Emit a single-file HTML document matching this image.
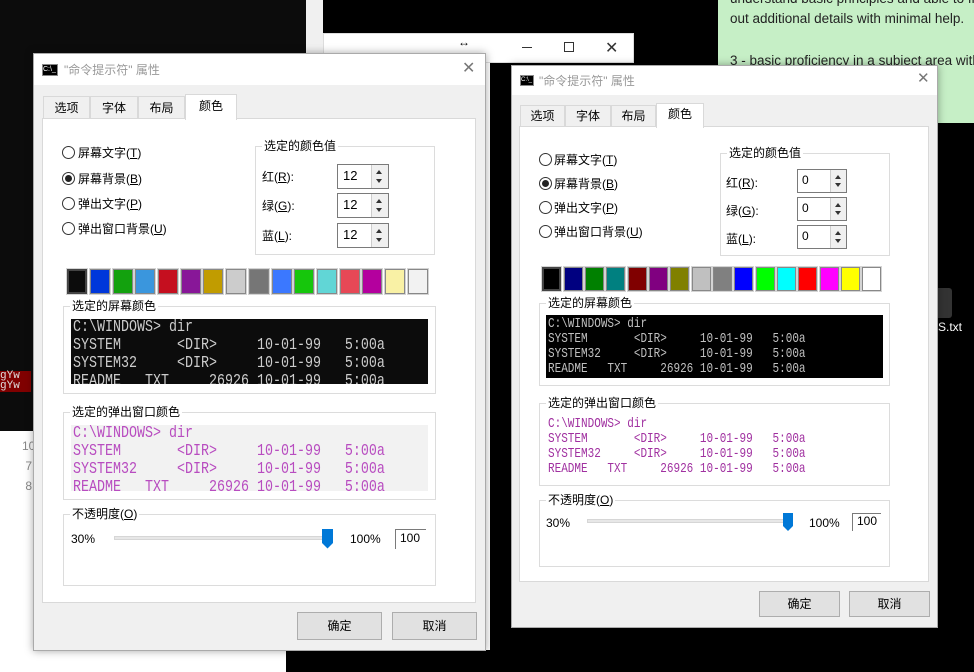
<!DOCTYPE html>
<html><head><meta charset="utf-8"><style>
*{margin:0;padding:0;box-sizing:border-box}
body{width:974px;height:672px;overflow:hidden;position:relative;background:#fff;font-family:"Liberation Sans","Noto Sans CJK SC",sans-serif;font-size:12px;color:#000}
.a{position:absolute}
.dlg{position:absolute;background:#f0f0f0;border:1px solid #aaa;box-shadow:0 0 8px rgba(0,0,0,.35)}
.title{position:absolute;left:0;top:0;right:0;background:#fff;color:#999;font-size:12px}
.tab{position:absolute;border:1px solid #d9d9d9;border-bottom:none;background:#f0f0f0;text-align:center}
.panel{position:absolute;background:#fff;border:1px solid #d9d9d9}
.grp{position:absolute;border:1px solid #dcdcdc}
.grp>span.l{position:absolute;top:-9px;left:6px;background:#fff;padding:0 2px;line-height:16px}
.radio{position:absolute;width:13px;height:13px;border:1px solid #333;border-radius:50%;background:#fff}
.radio.on::after{content:"";position:absolute;left:2px;top:2px;width:7px;height:7px;border-radius:50%;background:#222}
.spin{position:absolute;border:1px solid #7a7a7a;background:#fff}
.spin .b{position:absolute;right:0;top:0;bottom:0;border-left:1px solid #ccc;background:#f0f0f0}
.spin .b i{position:absolute;left:4px;width:0;height:0;border-left:3px solid transparent;border-right:3px solid transparent}
.sw{position:absolute;border:1px solid #888;outline:1px solid #d4d4d4}
.pre{position:absolute;overflow:hidden}
.pre span{display:block;font-family:"Liberation Mono",monospace;white-space:pre;transform-origin:0 0}
.L span{font-size:17px;line-height:18px;transform:scaleX(0.784)}
.R span{font-size:14px;line-height:15px;transform:scaleX(0.786)}
.btn{position:absolute;background:#e1e1e1;border:1px solid #adadad;text-align:center}
u{text-decoration:underline}
</style></head><body>
<div class="a" style="left:0;top:0;width:306px;height:431px;background:#0c0c0c"></div>
<div class="a" style="left:0;top:371px;width:31px;height:21px;background:#800000;color:#ddd;font-family:'Liberation Mono',monospace;font-size:11px;line-height:10px">gYw<br>gYw</div>
<div class="a" style="left:22px;top:436px;color:#888;font-size:12px;line-height:20px">10<br>&nbsp;7<br>&nbsp;8</div>
<div class="a" style="left:306px;top:0;width:17px;height:53px;background:#f0f0f0"></div>
<div class="a" style="left:323px;top:0;width:395px;height:33px;background:#000"></div>
<div class="a" style="left:323px;top:33px;width:311px;height:30px;background:#fff;border:1px solid #ddd"></div>
<div class="a" style="left:458px;top:35px;font-size:12px">↔</div>
<div class="a" style="left:522px;top:47px;width:10px;height:1px;background:#333"></div>
<div class="a" style="left:564px;top:42px;width:10px;height:10px;border:1px solid #333"></div>
<div class="a" style="left:605px;top:38px;font-size:16px;color:#333">✕</div>
<div class="a" style="left:490px;top:0;width:484px;height:672px;background:#000;z-index:-1"></div>
<div class="a" style="left:718px;top:0;width:256px;height:123px;background:#c6efc6;color:#222;font-size:13.5px;line-height:20px;padding-left:12px">
<div style="margin-top:-11px;white-space:nowrap">understand basic principles and able to fig</div>
<div style="white-space:nowrap">out additional details with minimal help.</div>
<div style="white-space:nowrap;margin-top:22px">3 - basic proficiency in a subject area witho</div></div>
<div class="a" style="left:930px;top:288px;width:22px;height:30px;background:#333;border-radius:3px"></div>
<div class="a" style="left:938px;top:320px;color:#fff;font-size:12px">S.txt</div>
<div class="a" style="left:286px;top:650px;width:300px;height:22px;background:#000"></div>

<!-- LEFT DIALOG -->
<div class="dlg" style="left:33px;top:53px;width:453px;height:598px">
 <div class="title" style="height:31px">
  <div class="a" style="left:8px;top:10px;width:16px;height:12px;background:#000;border:1px solid #888;color:#fff;font-size:7px;line-height:10px">C:\_</div>
  <div class="a" style="left:30px;top:7px">"命令提示符" 属性</div>
  <div class="a" style="left:428px;top:4px;font-size:16px;color:#777">✕</div>
 </div>
 <div class="tab" style="left:9px;top:42px;width:47px;height:23px;line-height:22px">选项</div>
 <div class="tab" style="left:56px;top:42px;width:48px;height:23px;line-height:22px">字体</div>
 <div class="tab" style="left:104px;top:42px;width:47px;height:23px;line-height:22px">布局</div>
 <div class="panel" style="left:8px;top:64px;width:434px;height:485px"></div>
 <div class="tab" style="left:151px;top:40px;width:52px;height:26px;line-height:22px;background:#fff;z-index:2">颜色</div>
</div>
<div class="a" style="left:33px;top:53px;width:453px;height:598px">
 <div class="radio" style="left:29px;top:93px"></div><div class="a" style="left:45px;top:91px">屏幕文字(<u>T</u>)</div>
 <div class="radio on" style="left:29px;top:119px"></div><div class="a" style="left:45px;top:117px">屏幕背景(<u>B</u>)</div>
 <div class="radio" style="left:29px;top:144px"></div><div class="a" style="left:45px;top:142px">弹出文字(<u>P</u>)</div>
 <div class="radio" style="left:29px;top:169px"></div><div class="a" style="left:45px;top:167px">弹出窗口背景(<u>U</u>)</div>
 <div class="grp" style="left:222px;top:93px;width:180px;height:109px"><span class="l">选定的颜色值</span></div>
 <div class="a" style="left:229px;top:115px">红(<u>R</u>):</div>
 <div class="a" style="left:229px;top:144px">绿(<u>G</u>):</div>
 <div class="a" style="left:229px;top:174px">蓝(<u>L</u>):</div>
 <div class="spin" style="left:304px;top:111px;width:52px;height:25px"><span class="a" style="left:5px;top:3px;font-size:13px">12</span><div class="b" style="width:17px"><i style="top:5px;border-bottom:4px solid #333"></i><i style="top:14px;border-top:4px solid #333"></i></div></div>
 <div class="spin" style="left:304px;top:140px;width:52px;height:25px"><span class="a" style="left:5px;top:3px;font-size:13px">12</span><div class="b" style="width:17px"><i style="top:5px;border-bottom:4px solid #333"></i><i style="top:14px;border-top:4px solid #333"></i></div></div>
 <div class="spin" style="left:304px;top:170px;width:52px;height:25px"><span class="a" style="left:5px;top:3px;font-size:13px">12</span><div class="b" style="width:17px"><i style="top:5px;border-bottom:4px solid #333"></i><i style="top:14px;border-top:4px solid #333"></i></div></div>
 <div class="sw" style="left:34px;top:216px;width:20px;height:25px;background:#0c0c0c;border:2px solid #444"></div>
 <div class="sw" style="left:57px;top:216px;width:20px;height:25px;background:#0037da"></div>
 <div class="sw" style="left:80px;top:216px;width:20px;height:25px;background:#13a10e"></div>
 <div class="sw" style="left:102px;top:216px;width:20px;height:25px;background:#3a96dd"></div>
 <div class="sw" style="left:125px;top:216px;width:20px;height:25px;background:#c50f1f"></div>
 <div class="sw" style="left:148px;top:216px;width:20px;height:25px;background:#881798"></div>
 <div class="sw" style="left:170px;top:216px;width:20px;height:25px;background:#c19c00"></div>
 <div class="sw" style="left:193px;top:216px;width:20px;height:25px;background:#cccccc"></div>
 <div class="sw" style="left:216px;top:216px;width:20px;height:25px;background:#767676"></div>
 <div class="sw" style="left:239px;top:216px;width:20px;height:25px;background:#3b78ff"></div>
 <div class="sw" style="left:261px;top:216px;width:20px;height:25px;background:#16c60c"></div>
 <div class="sw" style="left:284px;top:216px;width:20px;height:25px;background:#61d6d6"></div>
 <div class="sw" style="left:307px;top:216px;width:20px;height:25px;background:#e74856"></div>
 <div class="sw" style="left:329px;top:216px;width:20px;height:25px;background:#b4009e"></div>
 <div class="sw" style="left:352px;top:216px;width:20px;height:25px;background:#f9f1a5"></div>
 <div class="sw" style="left:375px;top:216px;width:20px;height:25px;background:#f2f2f2"></div>
 <div class="grp" style="left:30px;top:253px;width:373px;height:88px"><span class="l">选定的屏幕颜色</span></div>
 <div class="pre L" style="left:38px;top:266px;width:357px;height:65px;background:#0c0c0c;color:#cccccc;padding-left:2px"><span>C:\WINDOWS&gt; dir
SYSTEM       &lt;DIR&gt;     10-01-99   5:00a
SYSTEM32     &lt;DIR&gt;     10-01-99   5:00a
README   TXT     26926 10-01-99   5:00a</span></div>
 <div class="grp" style="left:30px;top:359px;width:373px;height:88px"><span class="l">选定的弹出窗口颜色</span></div>
 <div class="pre L" style="left:38px;top:372px;width:357px;height:66px;background:#f2f2f2;color:#b84cc0;padding-left:2px"><span>C:\WINDOWS&gt; dir
SYSTEM       &lt;DIR&gt;     10-01-99   5:00a
SYSTEM32     &lt;DIR&gt;     10-01-99   5:00a
README   TXT     26926 10-01-99   5:00a</span></div>
 <div class="grp" style="left:30px;top:461px;width:373px;height:72px"><span class="l">不透明度(<u>O</u>)</span></div>
 <div class="a" style="left:38px;top:479px">30%</div>
 <div class="a" style="left:81px;top:483px;width:215px;height:4px;background:#e7e7e7;border:1px solid #d6d6d6"></div>
 <svg class="a" style="left:289px;top:476px" width="12" height="20"><path d="M0 0H11V14L5.5 19.5L0 14Z" fill="#0078d7"/></svg>
 <div class="a" style="left:317px;top:479px">100%</div>
 <div class="a" style="left:362px;top:476px;width:31px;height:20px;background:#fff;border-left:1px solid #7a7a7a;border-top:1px solid #7a7a7a;padding:1px 0 0 4px;font-size:12px">100</div>
 <div class="btn" style="left:264px;top:559px;width:85px;height:28px;line-height:26px">确定</div>
 <div class="btn" style="left:359px;top:559px;width:85px;height:28px;line-height:26px">取消</div>
</div>

<!-- RIGHT DIALOG -->
<div class="dlg" style="left:511px;top:65px;width:427px;height:563px">
 <div class="title" style="height:29px">
  <div class="a" style="left:8px;top:9px;width:14px;height:11px;background:#000;border:1px solid #888;color:#fff;font-size:6px;line-height:9px">C:\_</div>
  <div class="a" style="left:27px;top:6px">"命令提示符" 属性</div>
  <div class="a" style="left:405px;top:3px;font-size:15px;color:#777">✕</div>
 </div>
 <div class="tab" style="left:8px;top:39px;width:45px;height:22px;line-height:21px">选项</div>
 <div class="tab" style="left:53px;top:39px;width:46px;height:22px;line-height:21px">字体</div>
 <div class="tab" style="left:99px;top:39px;width:45px;height:22px;line-height:21px">布局</div>
 <div class="panel" style="left:7px;top:60px;width:410px;height:456px"></div>
 <div class="tab" style="left:144px;top:37px;width:48px;height:25px;line-height:21px;background:#fff;z-index:2">颜色</div>
</div>
<div class="a" style="left:511px;top:65px;width:427px;height:563px">
 <div class="radio" style="left:28px;top:88px"></div><div class="a" style="left:43px;top:86px">屏幕文字(<u>T</u>)</div>
 <div class="radio on" style="left:28px;top:112px"></div><div class="a" style="left:43px;top:110px">屏幕背景(<u>B</u>)</div>
 <div class="radio" style="left:28px;top:136px"></div><div class="a" style="left:43px;top:134px">弹出文字(<u>P</u>)</div>
 <div class="radio" style="left:28px;top:160px"></div><div class="a" style="left:43px;top:158px">弹出窗口背景(<u>U</u>)</div>
 <div class="grp" style="left:209px;top:88px;width:170px;height:103px"><span class="l">选定的颜色值</span></div>
 <div class="a" style="left:215px;top:109px">红(<u>R</u>):</div>
 <div class="a" style="left:215px;top:137px">绿(<u>G</u>):</div>
 <div class="a" style="left:215px;top:165px">蓝(<u>L</u>):</div>
 <div class="spin" style="left:286px;top:104px;width:50px;height:24px"><span class="a" style="left:4px;top:3px;font-size:12px">0</span><div class="b" style="width:16px"><i style="top:5px;border-bottom:4px solid #333"></i><i style="top:13px;border-top:4px solid #333"></i></div></div>
 <div class="spin" style="left:286px;top:132px;width:50px;height:24px"><span class="a" style="left:4px;top:3px;font-size:12px">0</span><div class="b" style="width:16px"><i style="top:5px;border-bottom:4px solid #333"></i><i style="top:13px;border-top:4px solid #333"></i></div></div>
 <div class="spin" style="left:286px;top:160px;width:50px;height:24px"><span class="a" style="left:4px;top:3px;font-size:12px">0</span><div class="b" style="width:16px"><i style="top:5px;border-bottom:4px solid #333"></i><i style="top:13px;border-top:4px solid #333"></i></div></div>
 <div class="sw" style="left:31px;top:202px;width:19px;height:24px;background:#000;border:2px solid #444"></div>
 <div class="sw" style="left:53px;top:202px;width:19px;height:24px;background:#000080"></div>
 <div class="sw" style="left:74px;top:202px;width:19px;height:24px;background:#008000"></div>
 <div class="sw" style="left:95px;top:202px;width:19px;height:24px;background:#008080"></div>
 <div class="sw" style="left:117px;top:202px;width:19px;height:24px;background:#800000"></div>
 <div class="sw" style="left:138px;top:202px;width:19px;height:24px;background:#800080"></div>
 <div class="sw" style="left:159px;top:202px;width:19px;height:24px;background:#808000"></div>
 <div class="sw" style="left:181px;top:202px;width:19px;height:24px;background:#c0c0c0"></div>
 <div class="sw" style="left:202px;top:202px;width:19px;height:24px;background:#808080"></div>
 <div class="sw" style="left:223px;top:202px;width:19px;height:24px;background:#0000ff"></div>
 <div class="sw" style="left:245px;top:202px;width:19px;height:24px;background:#00ff00"></div>
 <div class="sw" style="left:266px;top:202px;width:19px;height:24px;background:#00ffff"></div>
 <div class="sw" style="left:287px;top:202px;width:19px;height:24px;background:#ff0000"></div>
 <div class="sw" style="left:309px;top:202px;width:19px;height:24px;background:#ff00ff"></div>
 <div class="sw" style="left:330px;top:202px;width:19px;height:24px;background:#ffff00"></div>
 <div class="sw" style="left:351px;top:202px;width:19px;height:24px;background:#ffffff"></div>
 <div class="grp" style="left:28px;top:238px;width:351px;height:83px"><span class="l">选定的屏幕颜色</span></div>
 <div class="pre R" style="left:35px;top:250px;width:337px;height:63px;background:#000;color:#c0c0c0;padding:2px 0 0 2px"><span>C:\WINDOWS&gt; dir
SYSTEM       &lt;DIR&gt;     10-01-99   5:00a
SYSTEM32     &lt;DIR&gt;     10-01-99   5:00a
README   TXT     26926 10-01-99   5:00a</span></div>
 <div class="grp" style="left:28px;top:338px;width:351px;height:83px"><span class="l">选定的弹出窗口颜色</span></div>
 <div class="pre R" style="left:35px;top:350px;width:337px;height:63px;background:#fff;color:#a030a0;padding:2px 0 0 2px"><span>C:\WINDOWS&gt; dir
SYSTEM       &lt;DIR&gt;     10-01-99   5:00a
SYSTEM32     &lt;DIR&gt;     10-01-99   5:00a
README   TXT     26926 10-01-99   5:00a</span></div>
 <div class="grp" style="left:28px;top:435px;width:351px;height:67px"><span class="l">不透明度(<u>O</u>)</span></div>
 <div class="a" style="left:35px;top:451px">30%</div>
 <div class="a" style="left:76px;top:454px;width:198px;height:4px;background:#e7e7e7;border:1px solid #d6d6d6"></div>
 <svg class="a" style="left:272px;top:448px" width="12" height="19"><path d="M0 0H10V13L5 18L0 13Z" fill="#0078d7"/></svg>
 <div class="a" style="left:298px;top:451px">100%</div>
 <div class="a" style="left:341px;top:448px;width:29px;height:18px;background:#fff;border-left:1px solid #7a7a7a;border-top:1px solid #7a7a7a;padding:0 0 0 4px;font-size:12px">100</div>
 <div class="btn" style="left:248px;top:526px;width:81px;height:26px;line-height:24px">确定</div>
 <div class="btn" style="left:338px;top:526px;width:81px;height:26px;line-height:24px">取消</div>
</div>
</body></html>
